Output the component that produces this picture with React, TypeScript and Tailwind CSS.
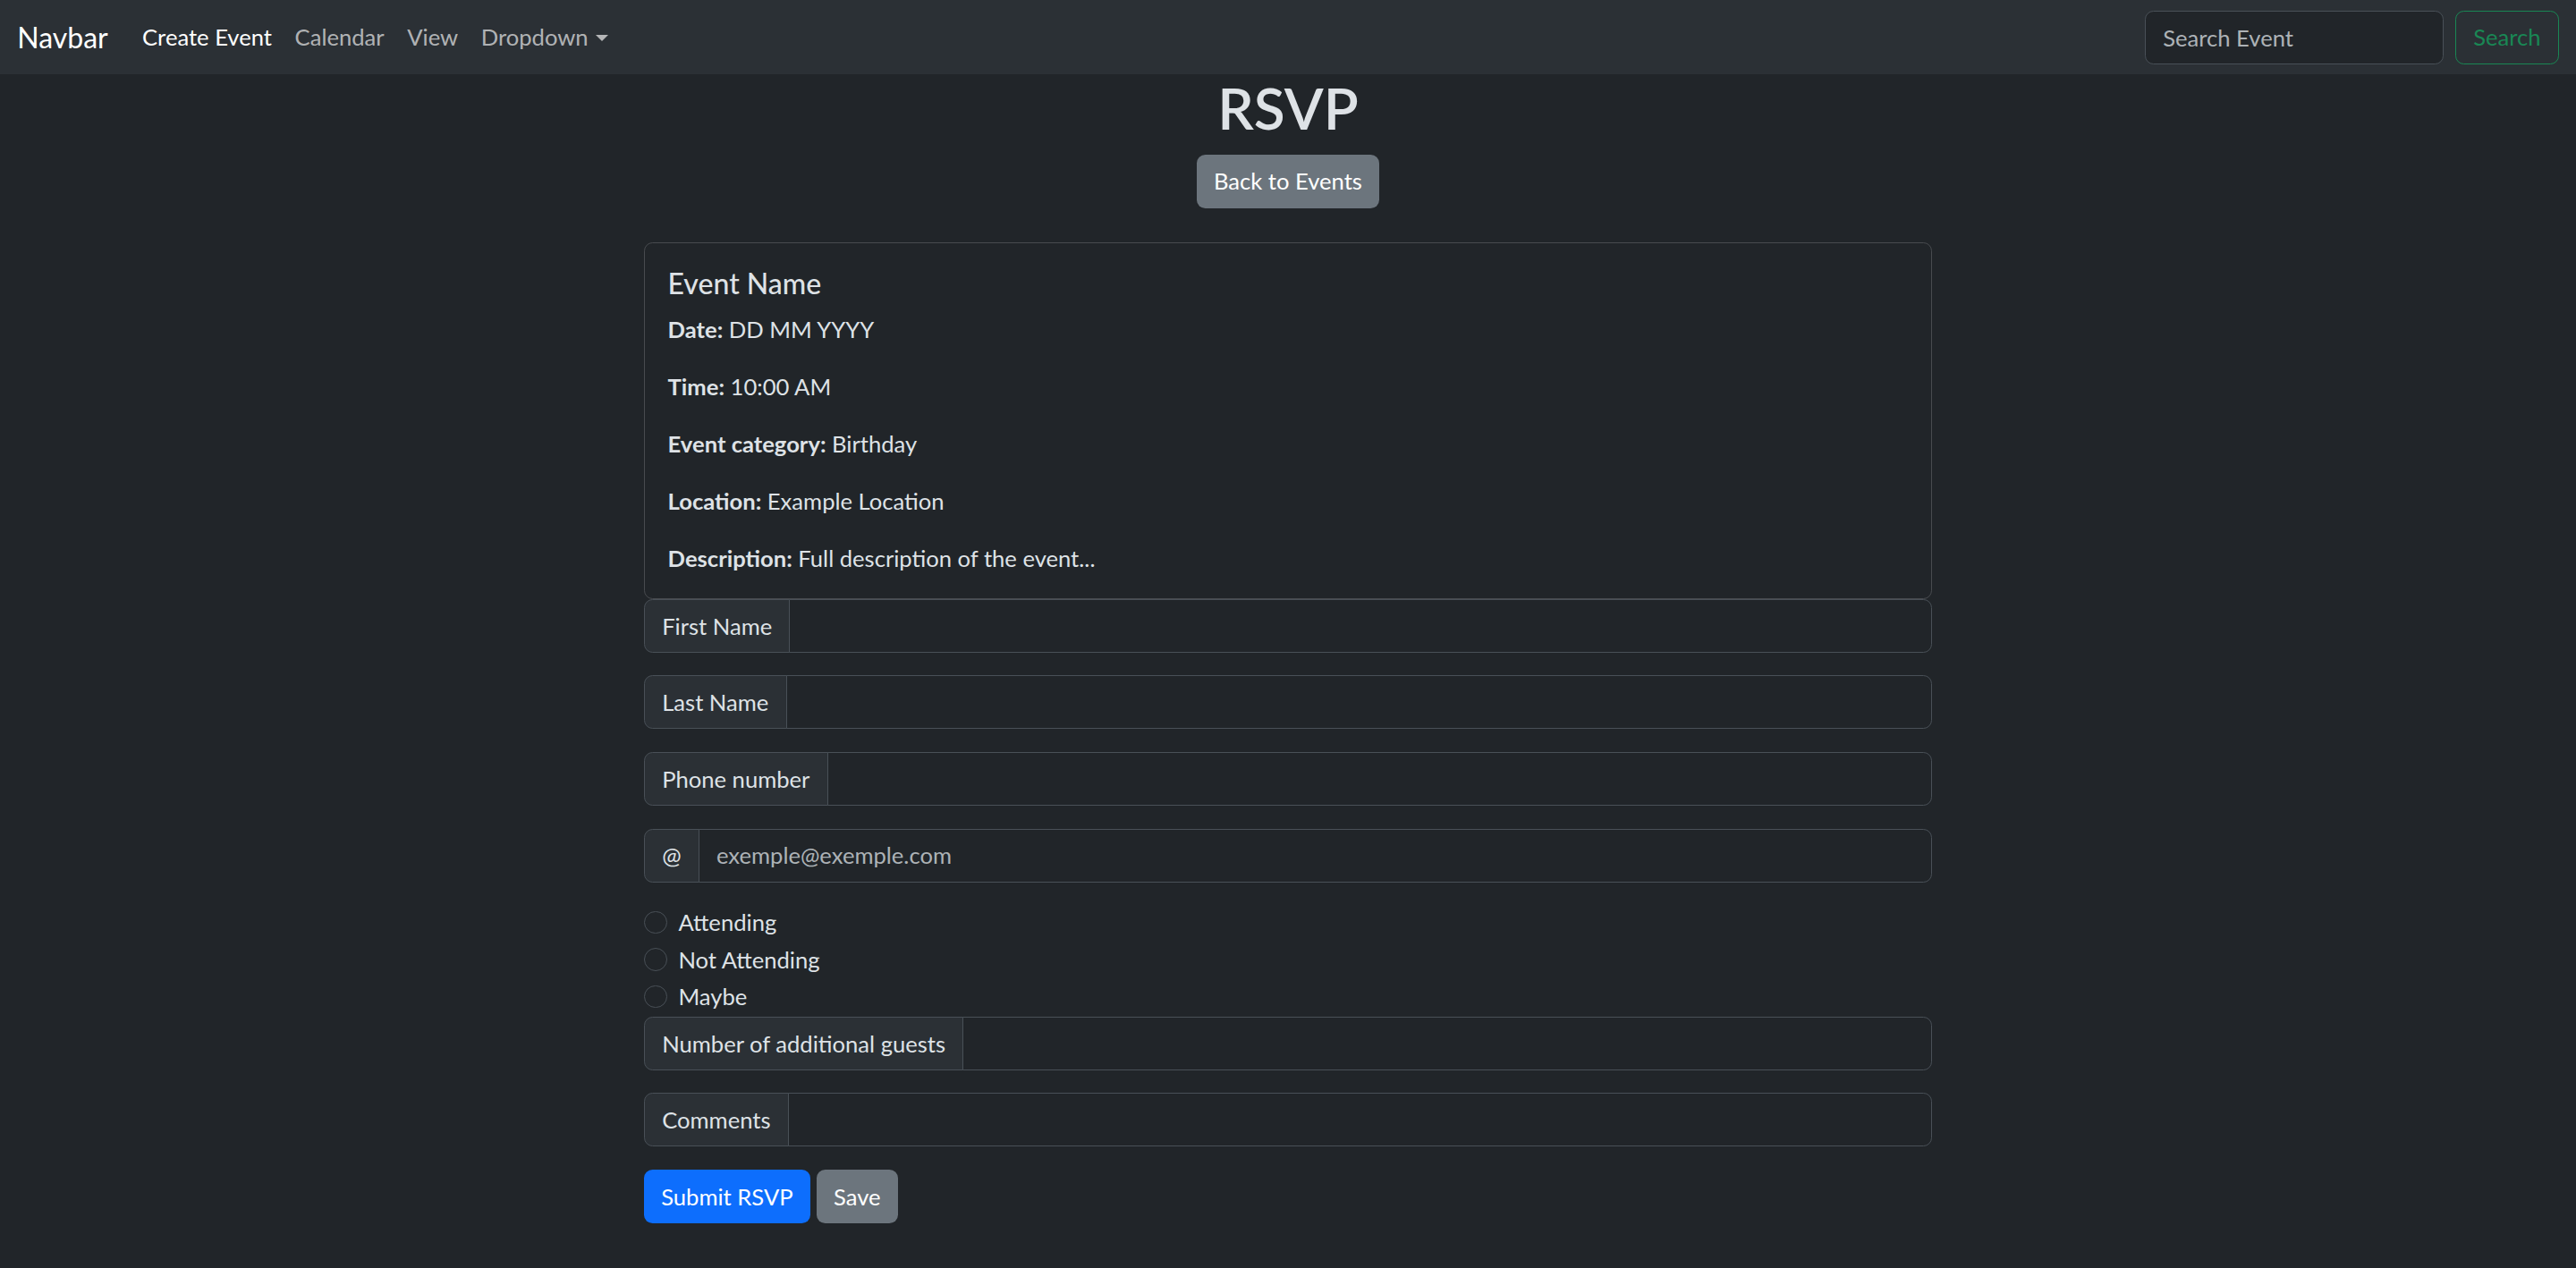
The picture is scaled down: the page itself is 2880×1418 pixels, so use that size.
import React from "react";

const navLinks = ["Calendar", "View"];

function Field({ label, placeholder }: { label: string; placeholder?: string }) {
  return (
    <div className="flex h-[60px] w-full">
      <span className="flex items-center whitespace-nowrap rounded-l-[9.6px] border border-[#495057] bg-[#2b3035] px-[19.2px] text-[#dee2e6]">
        {label}
      </span>
      <input
        type="text"
        placeholder={placeholder}
        className="-ml-px min-w-0 flex-1 rounded-r-[9.6px] border border-[#495057] bg-[#212529] px-[19.2px] text-[#dee2e6] outline-none placeholder:text-[#dee2e6bf]"
      />
    </div>
  );
}

function Detail({ label, value, last }: { label: string; value: string; last?: boolean }) {
  return (
    <p className={last ? "" : "mb-[25.6px]"}>
      <strong className="font-bold">{label}</strong> {value}
    </p>
  );
}

export default function App() {
  return (
    <div className="min-h-screen bg-[#212529] font-['Lato',sans-serif] text-[25.6px] leading-[38.4px] text-[#dee2e6]">
      <nav className="flex h-[83px] items-center justify-between bg-[#2b3035] px-[19.2px]">
        <div className="flex items-center">
          <a href="#" className="mr-[25.6px] text-[32px] leading-[48px] text-white">
            Navbar
          </a>
          <ul className="flex items-center">
            <li>
              <a href="#" className="block px-[12.8px] text-white">
                Create Event
              </a>
            </li>
            {navLinks.map((l) => (
              <li key={l}>
                <a href="#" className="block px-[12.8px] text-[#ffffffa6]">
                  {l}
                </a>
              </li>
            ))}
            <li>
              <a href="#" className="flex items-center px-[12.8px] text-[#ffffffa6]">
                Dropdown
                <span className="ml-[8px] mt-[2px] inline-block border-x-[7.7px] border-t-[7.7px] border-x-transparent border-t-[#ffffffa6]" />
              </a>
            </li>
          </ul>
        </div>
        <form className="flex items-center gap-[12.8px]" onSubmit={(e) => e.preventDefault()}>
          <input
            type="search"
            placeholder="Search Event"
            className="h-[60px] w-[334px] rounded-[9.6px] border border-[#495057] bg-[#212529] px-[19.2px] text-[#dee2e6] outline-none placeholder:text-[#dee2e6bf]"
          />
          <button className="h-[60px] w-[116px] rounded-[9.6px] border border-[#198754] text-[#198754]">
            Search
          </button>
        </form>
      </nav>

      <main className="mx-auto flex w-[1440px] flex-col items-center">
        <h1 className="mb-[12.8px] text-[64px] font-semibold leading-[76.8px]">RSVP</h1>
        <button className="h-[60px] rounded-[9.6px] bg-[#6c757d] px-[19.2px] text-white">
          Back to Events
        </button>

        <div className="mt-[38.4px] w-full rounded-[9.6px] border border-[#484b4f] p-[25.6px]">
          <h5 className="mb-[12.8px] text-[32px] font-medium leading-[38.4px]">Event Name</h5>
          <Detail label="Date:" value="DD MM YYYY" />
          <Detail label="Time:" value="10:00 AM" />
          <Detail label="Event category:" value="Birthday" />
          <Detail label="Location:" value="Example Location" />
          <Detail label="Description:" value="Full description of the event..." last />
        </div>

        <form className="flex w-full flex-col" onSubmit={(e) => e.preventDefault()}>
          <div className="flex flex-col gap-[25.6px]">
            <Field label="First Name" />
            <Field label="Last Name" />
            <Field label="Phone number" />
            <Field label="@" placeholder="exemple@exemple.com" />
          </div>

          <div className="mt-[25.6px]">
            {["Attending", "Not Attending", "Maybe"].map((opt) => (
              <label key={opt} className="mb-[3.2px] flex h-[38.4px] items-center">
                <input type="radio" name="rsvp" className="sr-only" />
                <span className="mr-[12.8px] h-[25.6px] w-[25.6px] rounded-full border border-[#495057] bg-[#212529]" />
                {opt}
              </label>
            ))}
          </div>

          <div className="flex flex-col gap-[25.6px]">
            <Field label="Number of additional guests" />
            <Field label="Comments" />
          </div>

          <div className="mt-[25.6px] flex gap-[7px]">
            <button className="h-[60px] rounded-[9.6px] bg-[#0d6efd] px-[19.2px] text-white">Submit RSVP</button>
            <button className="h-[60px] rounded-[9.6px] bg-[#6c757d] px-[19.2px] text-white">Save</button>
          </div>
        </form>
      </main>
    </div>
  );
}
